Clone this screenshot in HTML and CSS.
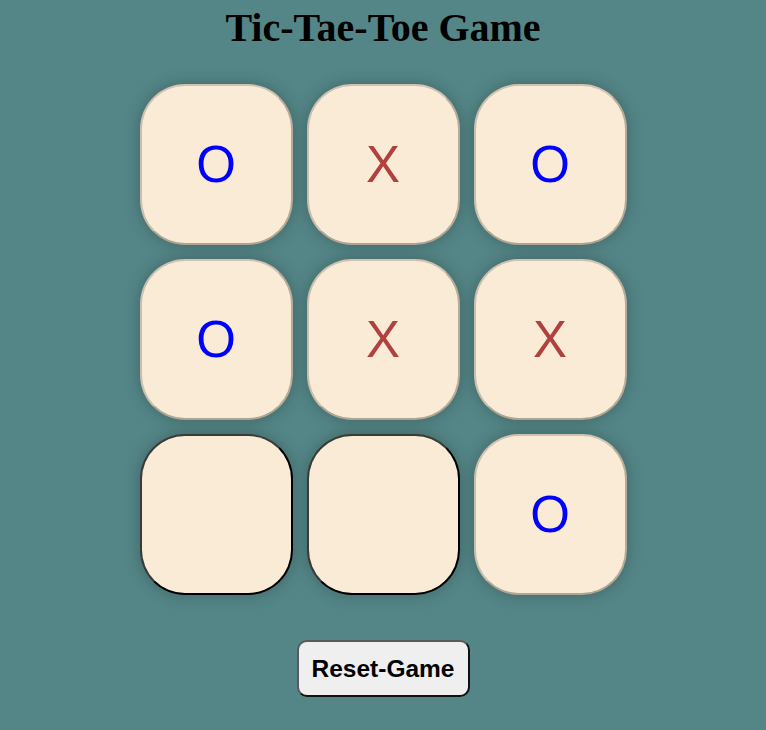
FILE: index.html
```html
<!DOCTYPE html>
<html lang="en">
<head>
<meta charset="UTF-8">
<title>Tic-Tae-Toe Game</title>
<link rel="stylesheet" href="styles.css">
</head>
<body>
  <main class="page">
    <h1 class="title">Tic-Tae-Toe Game</h1>
    <div class="board">
      <button class="cell o" disabled>O</button>
      <button class="cell x" disabled>X</button>
      <button class="cell o" disabled>O</button>
      <button class="cell o" disabled>O</button>
      <button class="cell x" disabled>X</button>
      <button class="cell x" disabled>X</button>
      <button class="cell empty"></button>
      <button class="cell empty"></button>
      <button class="cell o" disabled>O</button>
    </div>
    <button class="reset">Reset-Game</button>
  </main>
</body>
</html>
```
FILE: styles.css
```css
* { box-sizing: border-box; }

html, body {
  margin: 0;
  padding: 0;
}

body {
  background-color: #548687;
  font-family: "Liberation Serif", "Times New Roman", serif;
  min-height: 100vh;
}

.page {
  display: flex;
  flex-direction: column;
  align-items: center;
}

.title {
  margin: 6px 0 0;
  font-size: 40px;
  font-weight: bold;
  color: #000;
  line-height: 44px;
}

.board {
  margin-top: 34px;
  display: grid;
  grid-template-columns: repeat(3, 153px);
  grid-auto-rows: 161px;
  gap: 14px;
}

.cell {
  margin: 0;
  padding: 0;
  border-radius: 45px;
  background-color: #faebd7;
  font-family: "Liberation Sans", Arial, sans-serif;
  font-size: 51px;
  line-height: 1;
  box-shadow: 0 0 1rem rgba(0, 0, 0, 0.25);
  border: 2px solid;
}

.cell.o, .cell.x {
  border-color: #cfc2b2 #b7ab9b #b0a494 #cbbeae;
}

.cell.o { color: #0000ff; }
.cell.x { color: #b0413e; }

.cell.empty {
  border-color: #3a3a3a #000 #000 #3a3a3a;
}

.reset {
  margin-top: 45px;
  width: 173px;
  height: 57px;
  padding: 0;
  border: 2px solid;
  border-color: #5a5a5a #111 #111 #5a5a5a;
  border-radius: 10px;
  background-color: #efefef;
  color: #000;
  font-family: "Liberation Sans", Arial, sans-serif;
  font-weight: bold;
  font-size: 24.5px;
}
```
